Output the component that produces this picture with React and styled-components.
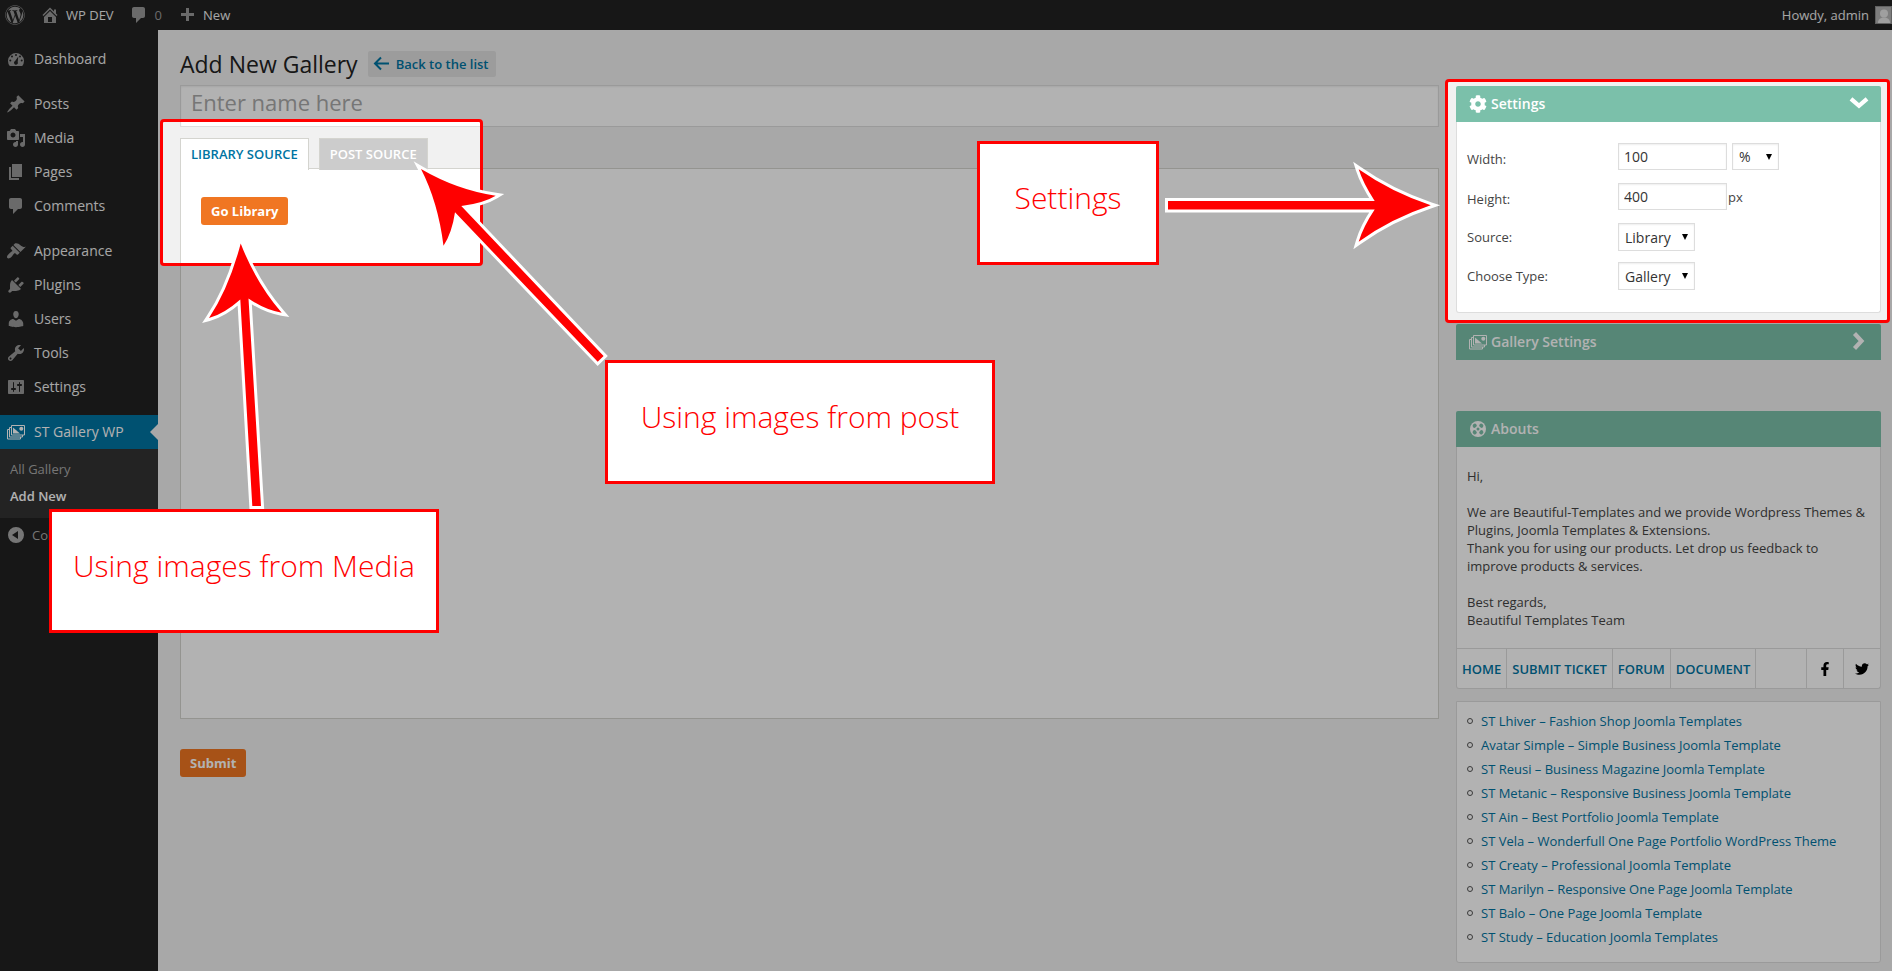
import React from "react";
import styled, { createGlobalStyle, css } from "styled-components";
import { FaWordpress, FaTwitter, FaFacebookF, FaCog } from "react-icons/fa";

const GlobalStyle = createGlobalStyle`
  *, *::before, *::after { box-sizing: border-box; }
  body {
    margin: 0;
    background: #f1f1f1;
    color: #444;
    font: 13px/18px "Open Sans", "Liberation Sans", sans-serif;
  }
  a { color: #0074a2; text-decoration: none; }
  ul { list-style: none; margin: 0; padding: 0; }
  button, input, select { font-family: inherit; }
`;

/* ---------- icons ---------- */

const paths = {
  home: "M16 8.5l1.53 1.53-1.06 1.06L10 4.6l-6.47 6.49-1.06-1.06L10 2.5l4 4v-2h2v4zm-6-2.46l6 5.99V18H4v-5.97zM12 17v-5H8v5h4z",
  comment: "M5 2h9c1.1 0 2 .9 2 2v7c0 1.1-.9 2-2 2h-2l-5 5v-5H5c-1.1 0-2-.9-2-2V4c0-1.1.9-2 2-2z",
  plus: "M17 8v3h-5v5H9v-5H4V8h5V3h3v5h5z",
  post: "M10.44 3.02l1.82-1.82 6.36 6.35-1.83 1.82c-1.05-.68-2.48-.57-3.41.36l-.75.75c-.92.93-1.04 2.35-.35 3.41l-1.83 1.82-2.41-2.41-2.8 2.79c-.42.42-3.38 2.71-3.8 2.29s1.86-3.39 2.28-3.81l2.79-2.79L4.1 9.36l1.83-1.82c1.05.69 2.48.57 3.4-.36l.75-.75c.93-.92 1.05-2.35.36-3.41z",
  media: "M13 11V4c0-.55-.45-1-1-1h-1.67L9 1H5L3.67 3H2c-.55 0-1 .45-1 1v7c0 .55.45 1 1 1h10c.55 0 1-.45 1-1zM7 4.5c1.38 0 2.5 1.12 2.5 2.5S8.38 9.5 7 9.5 4.5 8.38 4.5 7 5.62 4.5 7 4.5zM14 6h5v10.5c0 1.38-1.12 2.5-2.5 2.5S14 17.88 14 16.5s1.12-2.5 2.5-2.5c.17 0 .34.02.5.05V9h-3V6zm-4 8.05V13h2v3.5c0 1.38-1.12 2.5-2.5 2.5S7 17.88 7 16.5 8.12 14 9.5 14c.17 0 .34.02.5.05z",
  page: "M6 15V2h10v13H6zm-1 1h8v2H3V5h2v11z",
  appearance: "M14.48 11.06L7.41 3.99l1.5-1.5c.5-.56 2.3-.47 3.51.32 1.21.8 1.43 1.28 2.91 2.1 1.18.64 2.45 1.26 4.45.85zm-.71.71L6.7 4.7 4.93 6.47c-.39.39-.39 1.02 0 1.41l1.06 1.06c.39.39.39 1.03 0 1.42-.6.6-1.43 1.11-2.21 1.69-.35.26-.7.53-1.01.84C1.43 14.23.4 16.08 1.4 17.07c.99 1 2.84-.03 4.18-1.36.31-.31.58-.66.85-1.02.57-.78 1.08-1.61 1.69-2.21.39-.39 1.02-.39 1.41 0l1.06 1.06c.39.39 1.02.39 1.41 0z",
  plugins: "M13.11 4.36L9.87 7.6 8 5.73l3.24-3.24c.35-.34 1.05-.2 1.56.32.52.51.66 1.21.31 1.55zm-8 1.77l.91-1.12 9.01 9.01-1.19.84c-.71.71-2.63 1.16-3.82 1.16H6.14L4.9 17.26c-.59.59-1.54.59-2.12 0-.59-.58-.59-1.53 0-2.12l1.24-1.24v-3.88c0-1.13.4-3.19 1.09-3.89zm7.26 3.97l3.24-3.24c.34-.35 1.04-.21 1.55.31.52.51.66 1.21.31 1.55l-3.24 3.25z",
  users: "M10 9.25c-2.27 0-2.73-3.44-2.73-3.44C7 4.02 7.82 2 9.97 2c2.16 0 2.98 2.02 2.71 3.81 0 0-.41 3.44-2.68 3.44zm0 2.57L12.72 10c2.39 0 4.52 2.33 4.52 4.53v2.49s-3.65 1.13-7.24 1.13c-3.65 0-7.24-1.13-7.24-1.13v-2.49c0-2.25 1.94-4.48 4.47-4.48z",
  tools: "M16.68 9.77c-1.34 1.34-3.3 1.67-4.95.99l-5.41 6.52c-.99.99-2.59.99-3.58 0s-.99-2.59 0-3.57l6.52-5.42c-.68-1.65-.35-3.61.99-4.95 1.28-1.28 3.12-1.62 4.72-1.06l-2.89 2.89 2.82 2.82 2.86-2.87c.53 1.58.18 3.39-1.08 4.65zM3.81 16.21c.4.39 1.04.39 1.43 0 .4-.4.4-1.04 0-1.43-.39-.4-1.03-.4-1.43 0-.39.39-.39 1.03 0 1.43z",
  settings: "M18 16V4c0-.55-.45-1-1-1H3c-.55 0-1 .45-1 1v12c0 .55.45 1 1 1h14c.55 0 1-.45 1-1zM8 11h1c.55 0 1 .45 1 1s-.45 1-1 1H8v1.5c0 .28-.22.5-.5.5s-.5-.22-.5-.5V13H6c-.55 0-1-.45-1-1s.45-1 1-1h1V5.5c0-.28.22-.5.5-.5s.5.22.5.5V11zm5-2h-1c-.55 0-1-.45-1-1s.45-1 1-1h1V5.5c0-.28.22-.5.5-.5s.5.22.5.5V7h1c.55 0 1 .45 1 1s-.45 1-1 1h-1v5.5c0 .28-.22.5-.5.5s-.5-.22-.5-.5V9z",
  dashboard: "M3.76 17h12.48A8 8 0 1 0 3.76 17zM10 5a1 1 0 1 1 0 2 1 1 0 0 1 0-2zM6 6.5a1 1 0 1 1 0 2 1 1 0 0 1 0-2zM14 6.5a1 1 0 1 1 0 2 1 1 0 0 1 0-2zM4.300 10.500a1 1 0 1 1 0 2 1 1 0 0 1 0-2zM15.700 10.500a1 1 0 1 1 0 2 1 1 0 0 1 0-2zM12.300 7.500l-.6 5.500a1.900 1.900 0 1 1-2.600-1z",
  collapse: "M10 2a8 8 0 1 1 0 16 8 8 0 0 1 0-16zm2 4l-6 4 6 4z",
};

const Svg = styled.svg`
  display: block;
  flex: none;
  width: ${(p) => p.$size || 20}px;
  height: ${(p) => p.$size || 20}px;
  fill: ${(p) => p.$fill || "currentColor"};
`;

const Dashicon = ({ name, fill = "#999" }) => (
  <Svg viewBox="0 0 20 20" $fill={fill} fillRule="evenodd" aria-hidden="true">
    <path d={paths[name]} />
  </Svg>
);

const GalleryIcon = ({ fill = "#fff" }) => (
  <Svg viewBox="0 0 20 20" $fill="none" stroke={fill} strokeWidth="1" aria-hidden="true">
    <path d="M5.500 3.500h13v9.500h-13zM5.500 5.500h-2v9.500h13v-2M3.500 7.500h-2v9.500h13v-2" />
    <path d="M7 5.500l7 6H7z" fill={fill} stroke="none" />
    <circle cx="15.300" cy="6.700" r="2" fill={fill} stroke="none" />
  </Svg>
);

const ReelIcon = () => (
  <Svg viewBox="0 0 20 20" $fill="#fff" aria-hidden="true">
    <circle cx="10" cy="10" r="8" />
    <g fill="#7bc0aa">
      <ellipse cx="10" cy="10" rx="1.500" ry="1.500" />
      <ellipse cx="6.700" cy="6.700" rx="2.200" ry="1.900" transform="rotate(-45 6.700 6.700)" />
      <ellipse cx="13.300" cy="6.700" rx="2.200" ry="1.900" transform="rotate(45 13.300 6.700)" />
      <ellipse cx="6.700" cy="13.300" rx="2.200" ry="1.900" transform="rotate(45 6.700 13.300)" />
      <ellipse cx="13.300" cy="13.300" rx="2.200" ry="1.900" transform="rotate(-45 13.300 13.300)" />
    </g>
  </Svg>
);

const Chevron = ({ open }) => (
  <Svg viewBox="0 0 20 20" $fill="none" stroke="#fff" strokeWidth="4.200" aria-hidden="true">
    <path d={open ? "M2 4.800l8 7 8-7" : "M5.500 1.500l7 7.500-7 7.500"} />
  </Svg>
);

/* ---------- admin bar ---------- */

const Page = styled.div`
  position: relative;
  min-height: 100vh;
  overflow: hidden;
  display: flex;
  flex-direction: column;
`;

const AdminBar = styled.header`
  display: flex;
  align-items: center;
  gap: 15px;
  height: 30px;
  padding-left: 5px;
  background: #222;
`;

const BarLink = styled.a`
  display: flex;
  align-items: center;
  gap: 6px;
  height: 28px;
  color: ${(p) => (p.$muted ? "#999" : "#eee")};
  &:last-child { margin-left: auto; }
`;

const Logo = styled(FaWordpress)`
  width: 20px;
  height: 20px;
  color: #999;
`;

const Avatar = styled.span`
  display: flex;
  align-items: flex-end;
  justify-content: center;
  width: 17px;
  height: 18px;
  border: 1px solid #8c8c8c;
  background: #b4b4b4;
  color: #e4e4e4;
`;

/* ---------- side menu ---------- */

const Columns = styled.div`
  display: flex;
  flex: 1;
`;

const SideMenu = styled.nav`
  flex: none;
  width: 158px;
  padding-top: 12px;
  background: #222;
`;

const MenuGroup = styled.ul`
  margin-bottom: 11px;
`;

const MenuLink = styled.a`
  position: relative;
  display: flex;
  align-items: center;
  gap: 8px;
  height: 34px;
  padding-left: 6px;
  color: #eee;
  font-size: 14px;
  ${(p) => p.$current && css`
    background: #0074a2;
    color: #fff;
    &::after {
      content: "";
      position: absolute;
      right: 0;
      border: 8px solid transparent;
      border-right-color: #f1f1f1;
      border-left-width: 0;
    }
  `}
`;

const SubMenu = styled.ul`
  padding: 7px 0 8px;
  background: #333;
`;

const SubLink = styled.a`
  display: block;
  padding-left: 10px;
  line-height: 27px;
  color: ${(p) => (p.$current ? "#fff" : "#aaa")};
  font-weight: ${(p) => (p.$current ? 600 : 400)};
`;

const Collapse = styled.button`
  display: flex;
  align-items: center;
  gap: 6px;
  height: 34px;
  padding: 0 0 0 6px;
  border: 0;
  background: none;
  color: #aaa;
  font-size: 13px;
`;

/* ---------- content ---------- */

const Content = styled.main`
  flex: 1;
  min-width: 0;
  display: flex;
  flex-direction: column;
  padding: 20px 11px 8px 22px;
`;

const TitleRow = styled.div`
  display: flex;
  align-items: center;
  gap: 10px;
  height: 35px;
  padding-bottom: 8px;
`;

const Title = styled.h1`
  margin: 0;
  color: #222;
  font-size: 23px;
  line-height: 28px;
  font-weight: 400;
`;

const BackLink = styled.a`
  display: flex;
  align-items: center;
  gap: 6px;
  height: 26px;
  padding: 0 8px 0 5px;
  border-radius: 2px;
  background: #e0e0e0;
  font-weight: 600;
`;

const Workspace = styled.div`
  display: flex;
  align-items: flex-start;
  gap: 17px;
`;

const Editor = styled.form`
  flex: 1;
  min-width: 0;
`;

const NameInput = styled.input`
  display: block;
  width: 100%;
  height: 42px;
  margin-bottom: 11px;
  padding: 0 10px 8px;
  border: 1px solid #ddd;
  background: #fff;
  box-shadow: inset 0 1px 2px rgba(0, 0, 0, 0.07);
  color: #333;
  font-size: 22px;
  &::placeholder { color: #a9a9a9; opacity: 1; }
`;

const TabBar = styled.div`
  position: relative;
  display: flex;
  gap: 10px;
  margin-bottom: -2px;
`;

const Tab = styled.button`
  height: 32px;
  padding: 0 10px 2px;
  border: 1px solid #d4d4cf;
  border-bottom: 0;
  background: ${(p) => (p.$active ? "#fff" : "#ccc")};
  color: ${(p) => (p.$active ? "#0074a2" : "#fff")};
  font-size: 13px;
  font-weight: 600;
`;

const Panel = styled.section`
  height: 551px;
  padding: 28px 20px;
  border: 1px solid #d4d4cf;
  background: #fff;
`;

const OrangeButton = styled.button`
  height: 28px;
  padding: 0 10px;
  border: 0;
  border-radius: 3px;
  background: #f07622;
  color: #fff;
  font-size: 13px;
  font-weight: 700;
`;

const Actions = styled.div`
  padding-top: 30px;
`;

/* ---------- right column ---------- */

const Aside = styled.aside`
  flex: none;
  width: 425px;
  display: flex;
  flex-direction: column;
  padding-top: 1px;
`;

const Box = styled.section`
  margin-bottom: ${(p) => p.$after || 0}px;
`;

const BoxHead = styled.h2`
  display: flex;
  align-items: center;
  gap: 3px;
  height: 36px;
  margin: 0;
  padding: 0 12px;
  border-radius: 2px 2px 0 0;
  background: #7bc0aa;
  color: #fff;
  font-size: 14px;
  font-weight: 600;
  & > :nth-child(3) { margin-left: auto; }
`;

const Gear = styled(FaCog)`
  width: 20px;
  height: 18px;
`;

const BoxBody = styled.div`
  border: 1px solid #ddd;
  border-top: ${(p) => (p.$whole ? "1px solid #ddd" : "0")};
  border-radius: 0 0 3px 3px;
  background: #fff;
`;

const Fields = styled.div`
  display: grid;
  gap: 11px;
  padding: 21px 10px 22px;
`;

const Field = styled.div`
  display: grid;
  grid-template-columns: 151px auto auto 1fr;
  align-items: ${(p) => (p.$text ? "start" : "center")};
  height: ${(p) => (p.$text ? 29 : 28)}px;
  & > label { line-height: ${(p) => (p.$text ? 32 : 28)}px; }
`;

const control = css`
  border: 1px solid #ddd;
  border-radius: 0;
  background-color: #fff;
  box-shadow: inset 0 1px 2px rgba(0, 0, 0, 0.07);
  color: #333;
  font-size: 14px;
`;

const TextInput = styled.input`
  ${control}
  width: 109px;
  height: 27px;
  padding: 0 5px;
`;

const SelectWrap = styled.span`
  position: relative;
  display: flex;
  align-items: center;
  width: ${(p) => p.$width}px;
  margin-left: ${(p) => p.$gap || 0}px;
  &::after {
    content: "";
    position: absolute;
    right: 7px;
    border: 3px solid transparent;
    border-top: 6px solid #000;
    border-bottom: 0;
    pointer-events: none;
  }
`;

const Select = styled.select`
  ${control}
  appearance: none;
  width: 100%;
  height: ${(p) => p.$height || 28}px;
  padding: 0 6px;
`;

const Unit = styled.span`
  padding-left: 1px;
  line-height: 28px;
`;

const Letter = styled.div`
  padding: 20px 10px 19px;
  & p { margin: 0 0 18px; }
  & p:last-child { margin: 0; }
`;

const LinkBar = styled.nav`
  display: flex;
  height: 40px;
  border-top: 1px solid #ddd;
`;

const BarCell = styled.a`
  display: flex;
  align-items: center;
  justify-content: center;
  padding: 0 5px;
  border-right: 1px solid #ddd;
  font-weight: 600;
`;

const SocialCell = styled.a`
  display: flex;
  align-items: center;
  justify-content: center;
  width: 37px;
  border-left: 1px solid #ddd;
  color: #000;
  font-size: 14px;
  ${BarCell} + & { margin-left: auto; }
`;

const Templates = styled.ul`
  padding: 7px 10px 13px;
`;

const TemplateItem = styled.li`
  display: flex;
  align-items: center;
  gap: 8px;
  height: 24px;
  &::before {
    content: "";
    width: 6px;
    height: 6px;
    border: 1px solid #555;
    border-radius: 50%;
  }
`;

/* ---------- tour overlay ---------- */

const Dimmer = styled.div`
  position: absolute;
  inset: 0;
  background: rgba(0, 0, 0, 0.3);
  pointer-events: none;
  clip-path: polygon(
    evenodd,
    0 0, 100% 0, 100% 100%, 0 100%, 0 0,
    161px 120px, 482px 120px, 482px 265px, 161px 265px, 161px 120px,
    0 0,
    calc(100% - 446px) 80px, calc(100% - 3px) 80px, calc(100% - 3px) 322px, calc(100% - 446px) 322px, calc(100% - 446px) 80px,
    0 0
  );
`;

const Spotlight = styled.div`
  position: absolute;
  border: 3px solid #f00;
  border-radius: 4px;
  pointer-events: none;
`;

const TabSpotlight = styled(Spotlight)`
  left: 160px;
  top: 119px;
  width: 323px;
  height: 147px;
`;

const SettingsSpotlight = styled(Spotlight)`
  right: 2px;
  top: 79px;
  width: 445px;
  height: 244px;
`;

const Callout = styled.div`
  position: absolute;
  top: ${(p) => p.$top}px;
  ${(p) => (p.$right ? `right: ${p.$right}px;` : `left: ${p.$left}px;`)}
  display: flex;
  align-items: center;
  justify-content: center;
  width: ${(p) => p.$width}px;
  height: 124px;
  padding-bottom: 10px;
  border: 3px solid #f00;
  background: #fff;
  color: #f00;
  font-size: 30px;
  font-weight: 300;
  white-space: nowrap;
`;

const ArrowSvg = styled.svg`
  position: absolute;
  top: ${(p) => p.$top}px;
  ${(p) => (p.$right ? `right: ${p.$right}px;` : `left: ${p.$left}px;`)}
  fill: #f00;
  stroke: #fff;
  stroke-width: 6;
  paint-order: stroke;
  stroke-miterlimit: 10;
  pointer-events: none;
`;

const menuGroups = [
  [["dashboard", "Dashboard"]],
  [["post", "Posts"], ["media", "Media"], ["page", "Pages"], ["comment", "Comments"]],
  [["appearance", "Appearance"], ["plugins", "Plugins"], ["users", "Users"], ["tools", "Tools"], ["settings", "Settings"]],
];

const templates = [
  "ST Lhiver – Fashion Shop Joomla Templates",
  "Avatar Simple – Simple Business Joomla Template",
  "ST Reusi – Business Magazine Joomla Template",
  "ST Metanic – Responsive Business Joomla Template",
  "ST Ain – Best Portfolio Joomla Template",
  "ST Vela – Wonderfull One Page Portfolio WordPress Theme",
  "ST Creaty – Professional Joomla Template",
  "ST Marilyn – Responsive One Page Joomla Template",
  "ST Balo – One Page Joomla Template",
  "ST Study – Education Joomla Templates",
];

function SelectField({ id, label, value }) {
  return (
    <Field>
      <label htmlFor={id}>{label}</label>
      <SelectWrap $width={77}>
        <Select id={id}><option>{value}</option></Select>
      </SelectWrap>
    </Field>
  );
}

export default function App() {
  return (
    <Page>
      <GlobalStyle />
      <AdminBar>
        <BarLink href="#" aria-label="About WordPress"><Logo /></BarLink>
        <BarLink href="#"><Dashicon name="home" />WP DEV</BarLink>
        <BarLink href="#" $muted><Dashicon name="comment" />0</BarLink>
        <BarLink href="#"><Dashicon name="plus" />New</BarLink>
        <BarLink href="#">
          Howdy, admin
          <Avatar>
            <Svg viewBox="0 0 14 14" $size={14} aria-hidden="true">
              <circle cx="7" cy="4.500" r="4" />
              <path d="M1 14c0-4 3-5.500 6-5.500s6 1.500 6 5.500z" />
            </Svg>
          </Avatar>
        </BarLink>
      </AdminBar>
      <Columns>
        <SideMenu aria-label="Main menu">
          {menuGroups.map((group) => (
            <MenuGroup key={group[0][0]}>
              {group.map(([icon, label]) => (
                <li key={icon}><MenuLink href="#"><Dashicon name={icon} />{label}</MenuLink></li>
              ))}
            </MenuGroup>
          ))}
          <MenuLink href="#" $current><GalleryIcon />ST Gallery WP</MenuLink>
          <SubMenu>
            <li><SubLink href="#">All Gallery</SubLink></li>
            <li><SubLink href="#" $current>Add New</SubLink></li>
          </SubMenu>
          <Collapse type="button"><Dashicon name="collapse" fill="#aaa" />Collapse menu</Collapse>
        </SideMenu>
        <Content>
          <TitleRow>
            <Title>Add New Gallery</Title>
            <BackLink href="#">
              <Svg viewBox="0 0 17 17" $size={17} $fill="none" stroke="currentColor" strokeWidth="2" aria-hidden="true">
                <path d="M16 8.500H2M8 2.500l-6 6 6 6" />
              </Svg>
              Back to the list
            </BackLink>
          </TitleRow>
          <Workspace>
            <Editor>
              <NameInput aria-label="Gallery name" placeholder="Enter name here" />
              <TabBar role="tablist">
                <Tab type="button" role="tab" aria-selected="true" $active>LIBRARY SOURCE</Tab>
                <Tab type="button" role="tab" aria-selected="false">POST SOURCE</Tab>
              </TabBar>
              <Panel>
                <OrangeButton type="button">Go Library</OrangeButton>
              </Panel>
              <Actions><OrangeButton type="button">Submit</OrangeButton></Actions>
            </Editor>
            <Aside>
              <Box $after={11}>
                <BoxHead><Gear /><span>Settings</span><Chevron open /></BoxHead>
                <BoxBody>
                  <Fields>
                    <Field $text>
                      <label htmlFor="width">Width:</label>
                      <TextInput id="width" defaultValue="100" />
                      <SelectWrap $width={47} $gap={5}>
                        <Select $height={27} aria-label="Width unit"><option>%</option></Select>
                      </SelectWrap>
                    </Field>
                    <Field $text>
                      <label htmlFor="height">Height:</label>
                      <TextInput id="height" defaultValue="400" />
                      <Unit>px</Unit>
                    </Field>
                    <SelectField id="source" label="Source:" value="Library" />
                    <SelectField id="type" label="Choose Type:" value="Gallery" />
                  </Fields>
                </BoxBody>
              </Box>
              <Box $after={51}>
                <BoxHead><GalleryIcon /><span>Gallery Settings</span><Chevron /></BoxHead>
              </Box>
              <Box $after={12}>
                <BoxHead><ReelIcon /><span>Abouts</span></BoxHead>
                <BoxBody>
                  <Letter>
                    <p>Hi,</p>
                    <p>
                      We are Beautiful-Templates and we provide Wordpress Themes &amp; Plugins, Joomla Templates &amp; Extensions.
                      <br />
                      Thank you for using our products. Let drop us feedback to improve products &amp; services.
                    </p>
                    <p>Best regards,<br />Beautiful Templates Team</p>
                  </Letter>
                  <LinkBar aria-label="Support">
                    <BarCell href="#">HOME</BarCell>
                    <BarCell href="#">SUBMIT TICKET</BarCell>
                    <BarCell href="#">FORUM</BarCell>
                    <BarCell href="#">DOCUMENT</BarCell>
                    <SocialCell href="#" aria-label="Facebook"><FaFacebookF /></SocialCell>
                    <SocialCell href="#" aria-label="Twitter"><FaTwitter /></SocialCell>
                  </LinkBar>
                </BoxBody>
              </Box>
              <BoxBody $whole>
                <Templates>
                  {templates.map((name) => (
                    <TemplateItem key={name}><a href="#">{name}</a></TemplateItem>
                  ))}
                </Templates>
              </BoxBody>
            </Aside>
          </Workspace>
        </Content>
      </Columns>

      <Dimmer />
      <TabSpotlight />
      <SettingsSpotlight />
      <ArrowSvg $left={195} $top={230} width="105" height="290" viewBox="195 230 105 290" aria-hidden="true">
        <path d="M240.700 243.500Q229 288 209 318Q224 314 240.300 299.500L252.300 506H261L248.500 298.500Q265 310 281.700 312.700Q256 283 240.700 243.500z" />
      </ArrowSvg>
      <ArrowSvg $left={405} $top={155} width="210" height="220" viewBox="405 155 210 220" aria-hidden="true">
        <path d="M421 169Q457 190 495.700 195.700Q484 203 461.300 206L603.600 356L597.700 361.800L455 212.300Q452 233 443.500 245.700Q438 202 421 169z" />
      </ArrowSvg>
      <ArrowSvg $right={442} $top={150} width="290" height="110" viewBox="1160 150 290 110" aria-hidden="true">
        <path d="M1168 201H1374.700Q1363 183 1358.700 169.300Q1391 192 1430.700 205.300Q1391 218.500 1358.700 241.700Q1363 227 1374.700 209.500H1168z" />
      </ArrowSvg>
      <Callout $left={49} $top={509} $width={390}>Using images from Media</Callout>
      <Callout $left={605} $top={360} $width={390}>Using images from post</Callout>
      <Callout $right={733} $top={141} $width={182}>Settings</Callout>
    </Page>
  );
}
